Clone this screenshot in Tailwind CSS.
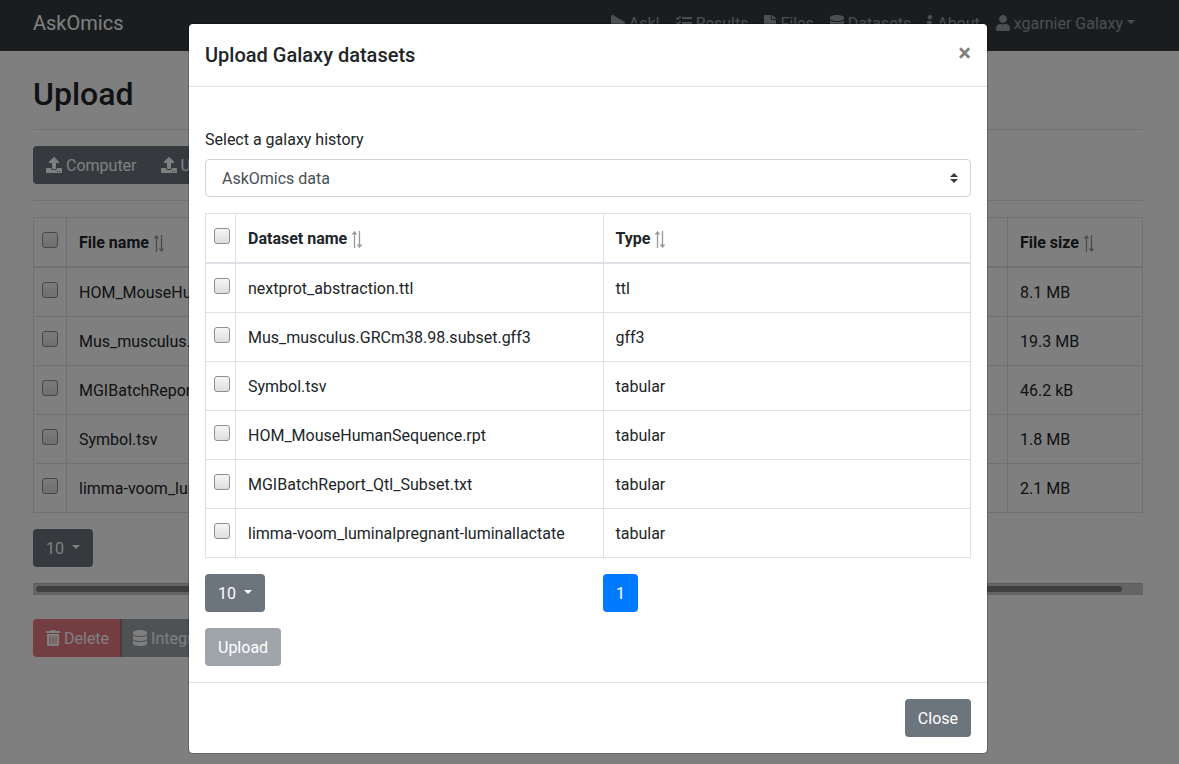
<!DOCTYPE html>
<html lang="en">
<head>
<meta charset="utf-8">
<meta name="viewport" content="width=device-width, initial-scale=1">
<title>AskOmics - Upload</title>
<script src="https://cdn.jsdelivr.net/npm/@tailwindcss/browser@4"></script>
</head>
<body class="relative min-h-screen overflow-x-hidden bg-white text-base text-[#212529] font-['Roboto',sans-serif]">

<svg class="hidden" aria-hidden="true">
  <symbol id="play" viewBox="0 0 448 512"><path d="M424.4 214.7L72.4 6.6C43.8-10.3 0 6.1 0 47.9V464c0 37.5 40.7 60.1 72.4 41.3l352-208c31.4-18.5 31.5-64.1 0-82.6z"/></symbol>
  <symbol id="tasks" viewBox="0 0 512 512"><path d="M139.6 35.5a12 12 0 0 0-17 0L58.9 98.8l-22.7-22.1a12 12 0 0 0-17 0L3.5 92.4a12 12 0 0 0 0 17l47.6 47.4a12.8 12.8 0 0 0 17.6 0l15.6-15.6 71-70.6a12 12 0 0 0 .1-17zm0 159.2a12 12 0 0 0-17 0L58.9 258l-22.7-22.1a12 12 0 0 0-17 0L3.5 251.600a12 12 0 0 0 0 17l47.600 47.600a12.800 12.800 0 0 0 17.600 0l15.600-15.600 71-70.600a12 12 0 0 0 .1-17zM64 368a48 48 0 1 0 0 96 48 48 0 1 0 0-96zm432 16H208a16 16 0 0 0-16 16v32a16 16 0 0 0 16 16h288a16 16 0 0 0 16-16v-32a16 16 0 0 0-16-16zm0-320H208a16 16 0 0 0-16 16v32a16 16 0 0 0 16 16h288a16 16 0 0 0 16-16V80a16 16 0 0 0-16-16zm0 160H208a16 16 0 0 0-16 16v32a16 16 0 0 0 16 16h288a16 16 0 0 0 16-16v-32a16 16 0 0 0-16-16z"/></symbol>
  <symbol id="file" viewBox="0 0 384 512"><path d="M224 136V0H24C10.700 0 0 10.700 0 24v464c0 13.300 10.700 24 24 24h336c13.300 0 24-10.700 24-24V160H248c-13.200 0-24-10.800-24-24zm160-14.100v6.100H256V0h6.100c6.400 0 12.500 2.500 17 7l97.900 98c4.500 4.500 7 10.600 7 16.900z"/></symbol>
  <symbol id="database" viewBox="0 0 448 512"><path d="M448 73.143v45.714C448 159.143 347.667 192 224 192S0 159.143 0 118.857V73.143C0 32.857 100.333 0 224 0s224 32.857 224 73.143zM448 176v102.857C448 319.143 347.667 352 224 352S0 319.143 0 278.857V176c48.125 33.143 136.208 48.572 224 48.572S399.874 209.143 448 176zm0 160v102.857C448 479.143 347.667 512 224 512S0 479.143 0 438.857V336c48.125 33.143 136.208 48.572 224 48.572S399.874 369.143 448 336z"/></symbol>
  <symbol id="info" viewBox="0 0 192 512"><path d="M20 424.229h20V279.771H20c-11.046 0-20-8.954-20-20V212c0-11.046 8.954-20 20-20h112c11.046 0 20 8.954 20 20v212.229h20c11.046 0 20 8.954 20 20V492c0 11.046-8.954 20-20 20H20c-11.046 0-20-8.954-20-20v-47.771c0-11.046 8.954-20 20-20zM96 0C56.235 0 24 32.235 24 72s32.235 72 72 72 72-32.235 72-72S135.764 0 96 0z"/></symbol>
  <symbol id="user" viewBox="0 0 448 512"><path d="M224 256c70.700 0 128-57.300 128-128S294.700 0 224 0 96 57.300 96 128s57.300 128 128 128zm89.600 32h-16.700c-22.200 10.200-46.900 16-72.900 16s-50.600-5.800-72.900-16h-16.700C60.200 288 0 348.200 0 422.400V464c0 26.500 21.500 48 48 48h352c26.500 0 48-21.500 48-48v-41.600c0-74.200-60.200-134.400-134.400-134.400z"/></symbol>
  <symbol id="upload" viewBox="0 0 512 512"><path d="M296 384h-80c-13.300 0-24-10.700-24-24V192h-87.700c-17.800 0-26.700-21.500-14.100-34.100L242.300 5.700c7.500-7.500 19.800-7.500 27.300 0l152.200 152.200c12.600 12.600 3.700 34.100-14.100 34.100H320v168c0 13.300-10.700 24-24 24zm216-8v112c0 13.300-10.700 24-24 24H24c-13.300 0-24-10.700-24-24V376c0-13.300 10.700-24 24-24h136v8c0 30.900 25.100 56 56 56h80c30.900 0 56-25.100 56-56v-8h136c13.300 0 24 10.700 24 24zm-124 88c0-11-9-20-20-20s-20 9-20 20 9 20 20 20 20-9 20-20zm64 0c0-11-9-20-20-20s-20 9-20 20 9 20 20 20 20-9 20-20z"/></symbol>
  <symbol id="trash" viewBox="0 0 448 512"><path d="M32 464a48 48 0 0 0 48 48h288a48 48 0 0 0 48-48V128H32zm272-256a16 16 0 0 1 32 0v224a16 16 0 0 1-32 0zm-96 0a16 16 0 0 1 32 0v224a16 16 0 0 1-32 0zm-96 0a16 16 0 0 1 32 0v224a16 16 0 0 1-32 0zM432 32H312l-9.400-18.700A24 24 0 0 0 281.100 0H166.800a23.700 23.700 0 0 0-21.400 13.300L136 32H16A16 16 0 0 0 0 48v32a16 16 0 0 0 16 16h416a16 16 0 0 0 16-16V48a16 16 0 0 0-16-16z"/></symbol>
  <symbol id="caret" viewBox="0 0 8 4"><path d="M0 0h8L4 4z"/></symbol>
  <symbol id="sort" viewBox="0 0 11 17"><path d="M3.500 17V1.500M1.500 3.500l2-2.500 2 2.500M8.500 0v15.500M6.500 13.500l2 2.500 2-2.500" fill="none" stroke="currentColor" stroke-width="1.300"/></symbol>
</svg>

<div class="pr-[3px]">
  <nav class="bg-[#343a40] -mr-[3px] pr-[3px] pt-[3px] pb-2">
    <div class="mx-auto flex h-10 max-w-[1140px] items-center justify-between px-[15px]">
      <a href="#" class="text-xl text-white">AskOmics</a>
      <div class="flex text-white/50 [&_a]:flex [&_a]:items-center [&_a]:gap-1 [&_a]:px-2 [&_a]:pt-0.5 [&_svg]:-mt-0.5 [&_svg]:fill-current">
        <a href="#"><svg class="h-4 w-3.5"><use href="#play"/></svg>Ask!</a>
        <a href="#"><svg class="size-4"><use href="#tasks"/></svg>Results</a>
        <a href="#"><svg class="h-4 w-3"><use href="#file"/></svg>Files</a>
        <a href="#"><svg class="h-4 w-3.5"><use href="#database"/></svg>Datasets</a>
        <a href="#"><svg class="h-4 w-1.5"><use href="#info"/></svg>About</a>
        <a href="#"><svg class="h-4 w-3.5"><use href="#user"/></svg>xgarnier Galaxy<svg class="-mt-1! h-1 w-2"><use href="#caret"/></svg></a>
      </div>
    </div>
  </nav>

  <main class="mx-auto max-w-[1140px] px-[15px] pt-6">
    <h2 class="text-[32px] leading-[38px] font-medium">Upload</h2>
    <hr class="my-4 border-black/10">
    <div class="flex text-white [&_svg]:-mt-0.5 [&_svg]:size-4 [&_svg]:fill-current">
      <button class="flex h-[38px] items-center gap-1 rounded-l bg-[#6c757d] px-[13px] pt-0.5"><svg><use href="#upload"/></svg>Computer</button>
      <button class="-ml-0.5 flex h-[38px] items-center gap-1 bg-[#6c757d] px-[13px] pt-0.5"><svg><use href="#upload"/></svg>URL</button>
      <button class="-ml-px flex h-[38px] items-center gap-1 rounded-r bg-[#6c757d] px-[13px] pt-0.5"><svg><use href="#upload"/></svg>Galaxy</button>
    </div>
    <hr class="my-4 border-black/10">

    <table class="w-full table-fixed border-collapse text-left [&_td]:border [&_td]:border-[#dee2e6] [&_td]:px-3 [&_td]:pt-[13px] [&_td]:pb-[11px] [&_th]:border [&_th]:border-b-2 [&_th]:border-[#dee2e6] [&_th]:px-3 [&_th]:pt-[13px] [&_th]:pb-[11px] [&_input]:mt-px [&_input]:block [&_input]:size-4 [&_input]:appearance-none [&_input]:rounded-[3px] [&_input]:border [&_input]:border-[#8f8f8a] [&_input]:bg-linear-to-b [&_input]:from-[#f6f6f5] [&_input]:to-[#dededc]">
      <colgroup><col class="w-[33px]"><col><col class="w-[135px]"></colgroup>
      <thead><tr><th class="pl-2! align-top"><input type="checkbox" aria-label="Select all files"></th><th><span class="flex items-center gap-1">File name <svg class="h-[17px] w-[11px] text-[#999]"><use href="#sort"/></svg></span></th><th><span class="flex items-center gap-1">File size <svg class="h-[17px] w-[11px] text-[#999]"><use href="#sort"/></svg></span></th></tr></thead>
      <tbody>
        <tr><td class="pl-2! align-top"><input type="checkbox" aria-label="HOM_MouseHumanSequence.rpt"></td><td>HOM_MouseHumanSequence.rpt</td><td>8.1 MB</td></tr>
        <tr><td class="pl-2! align-top"><input type="checkbox" aria-label="Mus_musculus.GRCm38.98.subset.gff3"></td><td>Mus_musculus.GRCm38.98.subset.gff3</td><td>19.3 MB</td></tr>
        <tr><td class="pl-2! align-top"><input type="checkbox" aria-label="MGIBatchReport_Qtl_Subset.txt"></td><td>MGIBatchReport_Qtl_Subset.txt</td><td>46.2 kB</td></tr>
        <tr><td class="pl-2! align-top"><input type="checkbox" aria-label="Symbol.tsv"></td><td>Symbol.tsv</td><td>1.8 MB</td></tr>
        <tr><td class="pl-2! align-top"><input type="checkbox" aria-label="limma-voom_luminalpregnant-luminallactate"></td><td>limma-voom_luminalpregnant-luminallactate</td><td>2.1 MB</td></tr>
      </tbody>
    </table>

    <button class="mt-4 flex h-[38px] items-center gap-2 rounded bg-[#6c757d] px-[13px] pt-0.5 text-white">10<svg class="-mt-1 h-1 w-2 fill-current"><use href="#caret"/></svg></button>
    <div class="mt-4 border-t border-[#b4b6b4] bg-[#c6c8c6] pt-0.5 pr-[21px] pb-[3px] pl-[3px]"><div class="h-1.5 rounded-full bg-[#7c7e80]"></div></div>
    <div class="mt-6 flex text-white [&_svg]:-mt-0.5 [&_svg]:h-4 [&_svg]:w-3.5 [&_svg]:fill-current">
      <button disabled class="flex h-[38px] items-center gap-1 rounded-l bg-[#dc3545] px-[13px] pt-0.5 opacity-65"><svg><use href="#trash"/></svg>Delete</button>
      <button disabled class="-ml-0.5 flex h-[38px] items-center gap-1 rounded-r bg-[#6c757d] px-[13px] pt-0.5 opacity-65"><svg><use href="#database"/></svg>Integrate</button>
    </div>
  </main>
</div>

<!-- Modal -->
<div class="absolute inset-0 bg-black/50 pt-[23px] pr-[3px]">
  <div role="dialog" aria-modal="true" aria-labelledby="modal-title" class="mx-auto max-w-[800px] rounded-[5px] border border-black/20 bg-white bg-clip-padding">
    <header class="flex items-start justify-between border-b border-[#dee2e6] p-4">
      <h5 id="modal-title" class="text-xl leading-[30px] font-medium">Upload Galaxy datasets</h5>
      <button aria-label="Close dialog" class="pt-px text-2xl leading-6 font-bold text-black/50">×</button>
    </header>
    <div class="p-4 pt-[41px]">
      <label for="history" class="block">Select a galaxy history</label>
      <div class="relative mt-[7px]">
        <select id="history" class="block h-[38px] w-full appearance-none rounded border border-[#ced4da] bg-white pt-0.5 pr-7 pl-4 text-[#495057]"><option>AskOmics data</option></select>
        <svg class="pointer-events-none absolute top-3.5 right-3 h-2.5 w-2.5 fill-[#343a40]" viewBox="0 0 10 10"><path d="M5 0L1 4h8zm0 10L1 6h8z"/></svg>
      </div>

      <table class="mt-4 w-full table-fixed border-collapse text-left [&_td]:border [&_td]:border-[#dee2e6] [&_td]:px-3 [&_td]:pt-[13px] [&_td]:pb-[11px] [&_th]:border [&_th]:border-b-2 [&_th]:border-[#dee2e6] [&_th]:px-3 [&_th]:pt-[13px] [&_th]:pb-[11px] [&_input]:mt-px [&_input]:block [&_input]:size-4 [&_input]:appearance-none [&_input]:rounded-[3px] [&_input]:border [&_input]:border-[#8f8f8a] [&_input]:bg-linear-to-b [&_input]:from-[#f6f6f5] [&_input]:to-[#dededc]">
        <colgroup><col class="w-[30px]"><col><col></colgroup>
        <thead><tr><th class="px-2! align-top"><input type="checkbox" aria-label="Select all datasets"></th><th><span class="flex items-center gap-1">Dataset name <svg class="h-[17px] w-[11px] text-[#999]"><use href="#sort"/></svg></span></th><th><span class="flex items-center gap-[3px]">Type <svg class="h-[17px] w-[11px] text-[#999]"><use href="#sort"/></svg></span></th></tr></thead>
        <tbody>
          <tr><td class="px-2! align-top"><input type="checkbox" aria-label="nextprot_abstraction.ttl"></td><td>nextprot_abstraction.ttl</td><td>ttl</td></tr>
          <tr><td class="px-2! align-top"><input type="checkbox" aria-label="Mus_musculus.GRCm38.98.subset.gff3"></td><td>Mus_musculus.GRCm38.98.subset.gff3</td><td>gff3</td></tr>
          <tr><td class="px-2! align-top"><input type="checkbox" aria-label="Symbol.tsv"></td><td>Symbol.tsv</td><td>tabular</td></tr>
          <tr><td class="px-2! align-top"><input type="checkbox" aria-label="HOM_MouseHumanSequence.rpt"></td><td>HOM_MouseHumanSequence.rpt</td><td>tabular</td></tr>
          <tr><td class="px-2! align-top"><input type="checkbox" aria-label="MGIBatchReport_Qtl_Subset.txt"></td><td>MGIBatchReport_Qtl_Subset.txt</td><td>tabular</td></tr>
          <tr><td class="px-2! align-top"><input type="checkbox" aria-label="limma-voom_luminalpregnant-luminallactate"></td><td>limma-voom_luminalpregnant-luminallactate</td><td>tabular</td></tr>
        </tbody>
      </table>

      <div class="mt-4 grid grid-cols-2 gap-[30px] text-white">
        <div><button class="flex h-[38px] items-center gap-2 rounded bg-[#6c757d] px-[13px] pt-0.5">10<svg class="-mt-1 h-1 w-2 fill-current"><use href="#caret"/></svg></button></div>
        <div><button aria-label="Page 1" class="h-[38px] rounded bg-[#007bff] px-[13px] pt-0.5">1</button></div>
      </div>
      <button disabled class="mt-4 block h-[38px] rounded bg-[#6c757d] px-[13px] pt-0.5 text-white opacity-65">Upload</button>
    </div>
    <footer class="flex justify-end border-t border-[#dee2e6] p-4">
      <button class="h-[38px] rounded bg-[#6c757d] px-[13px] pt-0.5 text-white">Close</button>
    </footer>
  </div>
</div>
</body>
</html>
